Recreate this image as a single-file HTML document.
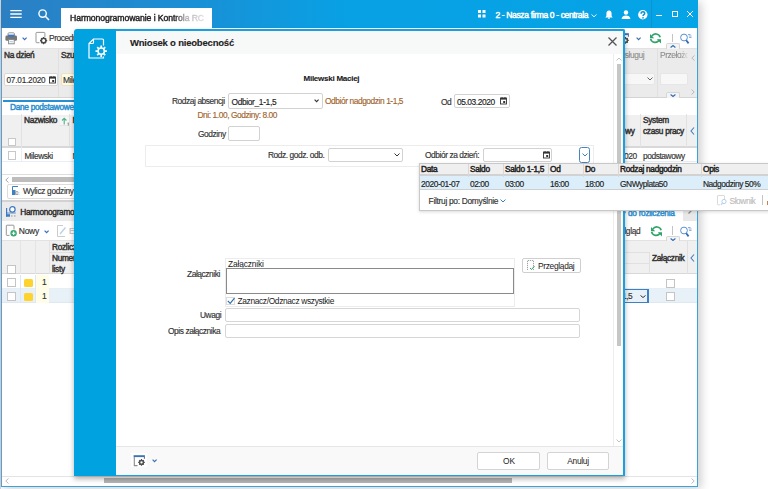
<!DOCTYPE html>
<html><head><meta charset="utf-8">
<style>
*{box-sizing:border-box;margin:0;padding:0}
html,body{width:768px;height:489px;overflow:hidden;background:#fff;font-family:"Liberation Sans",sans-serif;color:#333}
.a{position:absolute}
.t{position:absolute;white-space:nowrap;font-size:8.4px;line-height:10px;letter-spacing:-0.43px;-webkit-text-stroke:0.15px}
.b{font-weight:normal;font-size:8.3px;letter-spacing:-0.3px;-webkit-text-stroke:0.45px}
.inp{position:absolute;background:#fff;border:1px solid #d2d2d2;border-radius:2px}
.cb{position:absolute;width:9px;height:9px;border:1px solid #c4c4c4;background:#fff}
svg{position:absolute;overflow:visible}
</style></head><body>
<!-- ================= BACKGROUND WINDOW ================= -->
<div class="a" style="left:0;top:0;width:1px;height:489px;background:#d6d6d6"></div>
<div class="a" style="left:1px;top:0;width:697px;height:487px;background:#fff;border-left:1px solid #5c9fd5;border-right:1px solid #38a3df;border-bottom:1px solid #38a3df;box-shadow:3px 2px 9px rgba(0,0,0,0.2)"></div>
<!-- top bar -->
<div class="a" style="left:1px;top:0;width:697px;height:28px;background:linear-gradient(90deg,#2c7fc3 0%,#1c8ed4 25%,#08a1e4 50%,#04a4e6 100%)"></div>
<!-- hamburger -->
<svg style="left:10px;top:9px" width="12" height="10"><path d="M0.3 1.6 H11.7 M0.3 5 H11.7 M0.3 8.4 H11.7" stroke="#fff" stroke-width="1.3"/></svg>
<!-- search -->
<svg style="left:38px;top:9px" width="12" height="12"><circle cx="4.6" cy="4.6" r="3.7" fill="none" stroke="#fff" stroke-width="1.4"/><line x1="7.3" y1="7.3" x2="11" y2="11" stroke="#fff" stroke-width="1.6"/></svg>
<!-- tab -->
<div class="a" style="left:61px;top:8px;width:151px;height:20px;background:#fff"></div>
<div class="t" style="left:70px;top:12.8px;font-size:8.7px;letter-spacing:-0.1px;-webkit-text-stroke:0.4px;color:#1e1e1e;-webkit-mask-image:linear-gradient(90deg,#000 0,#000 104px,rgba(0,0,0,0.35) 116px,rgba(0,0,0,0.12) 135px)">Harmonogramowanie i Kontrola RC</div>
<!-- right header items -->
<svg style="left:478px;top:10px" width="8" height="8"><rect x="0" y="0" width="3" height="3" fill="#fff"/><rect x="4.5" y="0" width="3" height="3" fill="#fff"/><rect x="0" y="4.5" width="3" height="3" fill="#fff"/><rect x="4.5" y="4.5" width="3" height="3" fill="#fff"/></svg>
<div class="t" style="left:495.4px;top:9.5px;font-size:8.5px;letter-spacing:-0.35px;-webkit-text-stroke:0.45px;color:#fff">2 - Nasza firma 0 - centrala</div>
<svg style="left:590.5px;top:13.5px" width="6" height="4"><path d="M0.5 0.5 L3 2.8 L5.5 0.5" fill="none" stroke="#fff" stroke-width="0.9"/></svg>
<svg style="left:605px;top:10px" width="8" height="9"><path d="M4 0.4 C2.1 0.4 1.4 2 1.4 3.8 V6 L0.3 7.4 H7.7 L6.6 6 V3.8 C6.6 2 5.9 0.4 4 0.4 Z" fill="#fff"/><circle cx="4" cy="8.1" r="0.9" fill="#fff"/></svg>
<svg style="left:621px;top:9.5px" width="10" height="10"><circle cx="5" cy="2.5" r="2.2" fill="#fff"/><path d="M0.6 8.9 C0.9 6.2 2.9 5.4 5 5.4 C7.1 5.4 9.1 6.2 9.4 8.9 Z" fill="#fff"/></svg>
<svg style="left:638px;top:9.5px" width="10" height="10"><circle cx="4.8" cy="4.7" r="4.7" fill="#fff"/><path d="M3.1 3.7 C3.1 2.4 3.9 1.7 4.9 1.7 C6 1.7 6.7 2.4 6.7 3.4 C6.7 4.6 5 4.8 5 6.1" fill="none" stroke="#0a92d6" stroke-width="1.5"/><circle cx="5" cy="7.8" r="0.85" fill="#0a92d6"/></svg>
<div class="a" style="left:651px;top:0;width:1px;height:28px;background:#1590cf"></div>
<div class="a" style="left:656px;top:15px;width:6px;height:1px;background:#fff"></div>
<div class="a" style="left:672px;top:10.5px;width:6px;height:6px;border:1px solid #fff"></div>
<svg style="left:687px;top:11px" width="6" height="6"><path d="M0 0 L6 6 M6 0 L0 6" stroke="#fff" stroke-width="1"/></svg>

<!-- toolbar 1 -->
<div class="a" style="left:2px;top:48px;width:695px;height:1px;background:#e2e2e2"></div>
<svg style="left:5px;top:32px" width="13" height="13"><rect x="3" y="0.8" width="6.4" height="4" rx="1" fill="#fff" stroke="#8a8a8a" stroke-width="0.9"/><rect x="0.4" y="3.6" width="11.6" height="5.2" rx="1.4" fill="#767676"/><rect x="3" y="2.6" width="6.4" height="2.2" fill="#3c78c0"/><rect x="3.6" y="7.6" width="5.6" height="4.2" fill="#fff" stroke="#808080" stroke-width="0.9"/><rect x="4.6" y="9.3" width="3.4" height="0.9" fill="#9cbde6"/></svg>
<svg style="left:22px;top:36.5px" width="6" height="4"><path d="M0.6 0.6 L2.6 2.6 L4.6 0.6" fill="none" stroke="#3a6fb5" stroke-width="1.2"/></svg>
<svg style="left:35px;top:32px" width="13" height="13"><path d="M4.5 10.7 H1.8 Q1 10.7 1 9.9 V1.2 Q1 0.4 1.8 0.4 H9.1 Q9.9 0.4 9.9 1.2 V5" fill="none" stroke="#8c8c8c" stroke-width="0.9"/><g transform="translate(8.6,8.6)"><circle r="2.3" fill="none" stroke="#4a4a4a" stroke-width="1.6"/><path d="M0 -3.6 V-2.4 M0 2.4 V3.6 M-3.6 0 H-2.4 M2.4 0 H3.6 M-2.5 -2.5 L-1.7 -1.7 M2.5 2.5 L1.7 1.7 M-2.5 2.5 L-1.7 1.7 M2.5 -2.5 L1.7 -1.7" stroke="#4a4a4a" stroke-width="1.2"/></g></svg>
<div class="t" style="left:49px;top:33px;color:#333">Procedury</div>

<!-- filter panel -->
<div class="a" style="left:2px;top:49px;width:695px;height:49px;background:#ebebeb;border-bottom:1px solid #d4d4d4"></div>
<div class="t b" style="left:4px;top:50px">Na dzień</div>
<div class="inp" style="left:4px;top:73px;width:54px;height:13px;border-color:#d8d8d8"></div>
<div class="t" style="left:6.5px;top:75.5px;font-size:8.2px;letter-spacing:-0.2px">07.01.2020</div>
<svg style="left:49px;top:76px" width="7" height="8"><rect x="0.5" y="1" width="6" height="6" fill="none" stroke="#333" stroke-width="0.9"/><rect x="0.5" y="1" width="6" height="1.6" fill="#333"/><rect x="3.2" y="4" width="2" height="2" fill="#333"/><rect x="1.6" y="0" width="0.9" height="1.2" fill="#333"/><rect x="4.5" y="0" width="0.9" height="1.2" fill="#333"/></svg>
<div class="a" style="left:58px;top:49px;width:1px;height:48px;background:#e0e0e0"></div>
<div class="t b" style="left:61px;top:50px">Szukaj</div>
<div class="inp" style="left:60.5px;top:73px;width:40px;height:12.5px;background:#fffbe2;border-color:#ebe4c4"></div>
<div class="t" style="left:63px;top:75px;font-size:8.5px">Milewski</div>
<!-- filter right side -->
<div class="t" style="left:614.5px;top:50px;color:#8c8c8c;-webkit-text-stroke:0.1px">Obsługuj</div>
<div class="inp" style="left:600px;top:73px;width:55px;height:12px;background:#f7f7f7;border-color:#e6e6e6"></div>
<svg style="left:647px;top:77px" width="6" height="4"><path d="M0.5 0.5 L3 3 L5.5 0.5" fill="none" stroke="#666" stroke-width="1"/></svg>
<div class="a" style="left:657px;top:49px;width:1px;height:48px;background:#e0e0e0"></div>
<div class="t" style="left:660px;top:50px;color:#8c8c8c;-webkit-text-stroke:0.1px;-webkit-mask-image:linear-gradient(90deg,#000 0,#000 20px,rgba(0,0,0,0.25) 27px,transparent 28px)">Przełożony</div>
<div class="inp" style="left:660px;top:73px;width:28px;height:12px;background:#f7f7f7;border-color:#e6e6e6"></div>
<svg style="left:691px;top:55px" width="4" height="6"><path d="M3.5 0.5 L0.8 3 L3.5 5.5" fill="none" stroke="#bbb" stroke-width="1"/></svg>
<svg style="left:691px;top:89px" width="4" height="6"><path d="M0.5 0.5 L3.2 3 L0.5 5.5" fill="none" stroke="#bbb" stroke-width="1"/></svg>
<div class="a" style="left:665.5px;top:43px;width:14.5px;height:6px;background:#f4f4f4;border:1px solid #d6d6d6;border-bottom:none;border-radius:2px 2px 0 0"></div>
<svg style="left:670px;top:45px" width="6" height="3"><path d="M0.6 2.4 L3 0.6 L5.4 2.4" fill="none" stroke="#2f6db5" stroke-width="1.2"/></svg>
<div class="a" style="left:665.5px;top:92px;width:14.5px;height:6px;background:#f4f4f4;border:1px solid #d6d6d6;border-bottom:none;border-radius:2px 2px 0 0"></div>
<svg style="left:670px;top:93.5px" width="6" height="3"><path d="M0.6 0.6 L3 2.4 L5.4 0.6" fill="none" stroke="#2f6db5" stroke-width="1.2"/></svg>
<!-- toolbar right icons -->
<svg style="left:615px;top:31px" width="16" height="14"><path d="M13.4 4 V5.8" fill="none" stroke="#555" stroke-width="0.9"/><rect x="2.6" y="2.2" width="11.3" height="1.9" fill="#3d73b8"/><g transform="translate(10.5,9.4)"><circle r="1.9" fill="none" stroke="#505050" stroke-width="1.5"/><path d="M0 -3.3 V-2 M0 2 V3.3 M-3.3 0 H-2 M2 0 H3.3 M-2.3 -2.3 L-1.4 -1.4 M2.3 2.3 L1.4 1.4 M-2.3 2.3 L-1.4 1.4 M2.3 -2.3 L1.4 -1.4" stroke="#505050" stroke-width="1.2"/></g></svg>
<svg style="left:635.8px;top:36.5px" width="6" height="4"><path d="M0.6 0.6 L2.6 2.6 L4.6 0.6" fill="none" stroke="#3a6fb5" stroke-width="1.2"/></svg>
<svg style="left:649.3px;top:32.3px" width="13" height="12"><path d="M2.8 4.2 A4.6 4.6 0 0 1 11.2 5.2" fill="none" stroke="#2fa36b" stroke-width="1.6"/><path d="M1 2 L1 6.3 L5.2 6.3 Z" fill="#2fa36b"/><path d="M10.2 7.8 A4.6 4.6 0 0 1 1.6 6.9" fill="none" stroke="#2fa36b" stroke-width="1.6"/><path d="M12 11.5 L12 7.2 L7.8 7.2 Z" fill="#2fa36b"/></svg>
<div class="a" style="left:672px;top:34px;width:1px;height:8px;background:#c4c4c4"></div>
<svg style="left:680px;top:32.5px" width="13" height="12"><circle cx="4" cy="4.5" r="3.4" fill="none" stroke="#5b8fcf" stroke-width="1"/><line x1="6.2" y1="7.2" x2="8.6" y2="10.4" stroke="#2f6db5" stroke-width="1.8"/><path d="M8 1.5 H10.5 M8.8 3 H11.5 M9.2 4.5 H11.5" stroke="#7aa5dc" stroke-width="0.9"/></svg>

<!-- tabs / table 1 -->
<div class="a" style="left:3px;top:100px;width:80px;height:2px;background:#2a8fd0"></div>
<div class="t b" style="left:10px;top:102px;color:#2b8fd0">Dane podstawowe</div>
<div class="a" style="left:2px;top:115px;width:695px;height:33px;background:#f0f0f0;border-bottom:2px solid #d8d8d8"></div>
<div class="a" style="left:21px;top:114px;width:1px;height:33px;background:#e2e2e2"></div>
<div class="cb" style="left:7.5px;top:137.5px;width:8.5px;height:8.5px;border-color:#c8c8c8"></div>
<div class="t b" style="left:24px;top:115px">Nazwisko</div>
<div class="a" style="left:58.5px;top:115.5px;width:11px;height:10px;background:#f6f6f6;border:1px solid #e4e4e4;border-top-color:#f0f0f0;border-left-color:#f0f0f0"></div>
<svg style="left:61px;top:117px" width="9" height="9"><path d="M3.2 7.5 V1.3 M1 3.5 L3.2 1.2 L5.4 3.5" fill="none" stroke="#4fb383" stroke-width="1.1"/><path d="M6.6 6.2 L7.3 5.8 V8.6" fill="none" stroke="#666" stroke-width="0.7"/></svg>
<div class="a" style="left:69px;top:114px;width:1px;height:33px;background:#e2e2e2"></div><div class="t b" style="left:72.5px;top:115px">N</div><div class="t" style="left:72.5px;top:151px">M</div>
<div class="a" style="left:640px;top:114px;width:1px;height:33px;background:#e2e2e2"></div>
<div class="a" style="left:686px;top:114px;width:1px;height:33px;background:#e2e2e2"></div>
<div class="t b" style="left:625px;top:126px">wy</div>
<div class="t b" style="left:643px;top:114.5px;line-height:11.5px">System<br>czasu pracy</div>
<svg style="left:690px;top:127px" width="5" height="8"><path d="M4 0.5 L1 4 L4 7.5" fill="none" stroke="#3f7fc4" stroke-width="1.1"/></svg>
<div class="cb" style="left:7.5px;top:151px;width:8.5px;height:8.5px;border-color:#c8c8c8"></div>
<div class="a" style="left:21px;top:147px;width:1px;height:14px;background:#e6eef6"></div>
<div class="t" style="left:24.5px;top:151px">Milewski</div>
<div class="t" style="left:624px;top:151px">020</div>
<div class="t" style="left:643px;top:151px">podstawowy</div>
<div class="a" style="left:2px;top:161px;width:695px;height:1px;background:#e8eef5"></div>
<div class="a" style="left:2px;top:174px;width:695px;height:1px;background:#dedede"></div>
<!-- hscroll 1 -->
<svg style="left:5px;top:177px" width="4" height="6"><path d="M3.5 0.5 L0.8 3 L3.5 5.5" fill="none" stroke="#aaa" stroke-width="1"/></svg>
<div class="a" style="left:12px;top:177px;width:600px;height:5px;background:#bdbdbd"></div>
<!-- Wylicz godziny -->
<div class="a" style="left:7px;top:184px;width:80px;height:15px;background:#fff;border:1px solid #dcdcdc;border-radius:2px"></div>
<svg style="left:12px;top:186px" width="9" height="10"><path d="M0.5 9 V0.5 H6" fill="none" stroke="#3f7fc4" stroke-width="1"/><rect x="0.5" y="4" width="3" height="5" fill="#3f7fc4"/><text x="3.5" y="9" font-size="5" fill="#555" font-family="Liberation Sans">0:</text></svg>
<div class="t" style="left:23px;top:186px;font-size:8.3px;letter-spacing:-0.3px">Wylicz godziny</div>
<!-- section 2 header -->
<div class="a" style="left:2px;top:200px;width:200px;height:21px;background:#ebebeb;border-top:2px solid #d2d2d2"></div>
<svg style="left:5px;top:205px" width="12" height="13"><path d="M1.6 3 V11.5" stroke="#3d78c2" stroke-width="1.2"/><path d="M1.6 8 H10.8" stroke="#3d78c2" stroke-width="0.8"/><rect x="1" y="9.2" width="4" height="2.5" fill="#3d78c2"/><circle cx="7.4" cy="4.4" r="2.7" fill="#fff" stroke="#3d78c2" stroke-width="1.2"/><rect x="6" y="10.2" width="1.5" height="1.5" fill="#b0b0b0"/><rect x="9" y="10.2" width="1.5" height="1.5" fill="#b0b0b0"/></svg>
<div class="t" style="left:20.3px;top:206.5px;font-size:8.3px;letter-spacing:-0.3px;-webkit-text-stroke:0.4px;color:#2a2a2a">Harmonogramowanie</div>
<div class="t b" style="left:628px;top:207.8px;color:#2b8fd0">do rozliczenia</div><svg style="left:623px;top:211px" width="4" height="5"><path d="M0.5 0.5 L3 0.5 L1.5 4 Z" fill="#2b8fd0"/></svg>
<div class="a" style="left:683px;top:210px;width:14px;height:11px;background:#e8e8e8"></div>
<svg style="left:688px;top:210px" width="5" height="4"><path d="M0.5 3.5 L3.5 0.5" fill="none" stroke="#8a8a8a" stroke-width="1.2"/></svg>
<!-- toolbar 2 -->
<svg style="left:5px;top:224px" width="13" height="14"><path d="M4.5 11.4 H2 Q1.3 11.4 1.3 10.7 V1.9 Q1.3 1.2 2 1.2 H8.3 Q9 1.2 9 1.9 V5.5" fill="none" stroke="#8a8a8a" stroke-width="0.9"/><circle cx="8.6" cy="9.2" r="3.2" fill="#3aa873"/><path d="M8.6 7.4 V11 M6.8 9.2 H10.4" stroke="#fff" stroke-width="1.1"/></svg>
<div class="t" style="left:18.8px;top:226px;font-size:8.5px;letter-spacing:-0.3px">Nowy</div>
<svg style="left:44px;top:229.5px" width="6" height="4"><path d="M0.6 0.6 L2.6 2.6 L4.6 0.6" fill="none" stroke="#3a6fb5" stroke-width="1.2"/></svg>
<svg style="left:57px;top:225px" width="10" height="12"><path d="M6 0.5 H0.5 V11.5 H8" fill="none" stroke="#ccc" stroke-width="1"/><path d="M3 9 L8.5 2.5" stroke="#b8d0ea" stroke-width="1.3"/></svg>
<div class="t" style="left:69px;top:226px;color:#bbb">E</div>
<div class="a" style="left:2px;top:240px;width:695px;height:1px;background:#e2e2e2"></div>
<div class="t" style="left:612px;top:226px;font-size:8.3px;letter-spacing:-0.3px">Podgląd</div>
<svg style="left:649.5px;top:225px" width="13" height="12"><path d="M2.8 4.2 A4.6 4.6 0 0 1 11.2 5.2" fill="none" stroke="#2fa36b" stroke-width="1.6"/><path d="M1 2 L1 6.3 L5.2 6.3 Z" fill="#2fa36b"/><path d="M10.2 7.8 A4.6 4.6 0 0 1 1.6 6.9" fill="none" stroke="#2fa36b" stroke-width="1.6"/><path d="M12 11.5 L12 7.2 L7.8 7.2 Z" fill="#2fa36b"/></svg>
<div class="a" style="left:672px;top:226px;width:1px;height:9px;background:#c4c4c4"></div>
<svg style="left:680px;top:225.5px" width="13" height="12"><circle cx="4" cy="4.5" r="3.4" fill="none" stroke="#5b8fcf" stroke-width="1"/><line x1="6.2" y1="7.2" x2="8.6" y2="10.4" stroke="#2f6db5" stroke-width="1.8"/><path d="M8 1.5 H10.5 M8.8 3 H11.5 M9.2 4.5 H11.5" stroke="#7aa5dc" stroke-width="0.9"/></svg>
<div class="a" style="left:665.5px;top:236px;width:14.5px;height:6px;background:#f4f4f4;border:1px solid #d6d6d6;border-bottom:none;border-radius:2px 2px 0 0"></div>
<svg style="left:670px;top:237.5px" width="6" height="3"><path d="M0.6 0.6 L3 2.4 L5.4 0.6" fill="none" stroke="#2f6db5" stroke-width="1.2"/></svg>
<!-- table 2 -->
<div class="a" style="left:2px;top:241px;width:695px;height:33px;background:#f0f0f0;border-bottom:1px solid #d8d8d8"></div>
<div class="a" style="left:20px;top:241px;width:1px;height:33px;background:#e4e4e4"></div>
<div class="a" style="left:35px;top:241px;width:1px;height:33px;background:#e4e4e4"></div>
<div class="a" style="left:49px;top:241px;width:1px;height:33px;background:#e4e4e4"></div>
<div class="a" style="left:50px;top:252px;width:599px;height:1px;background:#e0e0e0"></div>
<div class="a" style="left:150px;top:263px;width:499px;height:1px;background:#e0e0e0"></div>
<div class="cb" style="left:7px;top:265px"></div>
<div class="t b" style="left:52px;top:242px;line-height:11px">Rozliczenie<br>Numer<br>listy</div>
<div class="a" style="left:649px;top:252px;width:1px;height:22px;background:#e0e0e0"></div>
<div class="a" style="left:687px;top:241px;width:1px;height:33px;background:#e0e0e0"></div>
<div class="t b" style="left:652px;top:253px">Załącznik</div>
<svg style="left:690px;top:254px" width="5" height="8"><path d="M4 0.5 L1 4 L4 7.5" fill="none" stroke="#3f7fc4" stroke-width="1.1"/></svg>
<!-- rows -->
<div class="a" style="left:2px;top:275px;width:695px;height:14px;background:#fff;border-bottom:1px solid #e6eef6"></div>
<div class="a" style="left:2px;top:289px;width:695px;height:14px;background:#e9f1f8;border-bottom:1px solid #dfe8f0"></div>
<div class="a" style="left:20px;top:275px;width:1px;height:28px;background:#dce8f3"></div>
<div class="a" style="left:35px;top:275px;width:1px;height:28px;background:#dce8f3"></div>
<div class="a" style="left:36px;top:275px;width:13px;height:28px;background:#fffde8"></div>
<div class="cb" style="left:7px;top:278px"></div>
<div class="cb" style="left:7px;top:292px"></div>
<div class="a" style="left:24px;top:279px;width:9px;height:7.5px;background:#ffd32e;border-radius:1.5px"></div>
<div class="a" style="left:24px;top:293px;width:9px;height:7.5px;background:#ffd32e;border-radius:1.5px"></div>
<div class="t" style="left:42px;top:277px;font-size:8.5px">1</div>
<div class="t" style="left:42px;top:291px;font-size:8.5px">1</div>

<div class="cb" style="left:666px;top:278.5px;border-color:#c4c4c4"></div>
<div class="cb" style="left:666px;top:292px;border-color:#c4c4c4"></div>
<div class="a" style="left:618px;top:289px;width:31px;height:14px;border:1px solid #3f7fc4;border-right-width:2px;background:#e9f1f8"></div>
<div class="t" style="left:622px;top:291px">1,5</div>
<svg style="left:640px;top:295px" width="6" height="3"><path d="M0.5 0.5 L3 2.5 L5.5 0.5" fill="none" stroke="#333" stroke-width="1"/></svg>
<!-- bottom hscroll -->
<svg style="left:5px;top:478px" width="4" height="6"><path d="M3.5 0.5 L0.8 3 L3.5 5.5" fill="none" stroke="#bbb" stroke-width="1"/></svg>
<svg style="left:691px;top:478px" width="4" height="6"><path d="M0.5 0.5 L3.2 3 L0.5 5.5" fill="none" stroke="#bbb" stroke-width="1"/></svg>
<div class="a" style="left:104px;top:478px;width:408px;height:5px;background:#b5b5b5"></div>
<div class="a" style="left:2px;top:476px;width:695px;height:1px;background:#e4e4e4"></div>

<!-- ================= DIALOG ================= -->
<div class="a" style="left:74px;top:29px;width:551px;height:447px;box-shadow:0 3px 5px rgba(0,0,0,0.3)"></div>
<div class="a" style="left:74px;top:29px;width:42px;height:447px;background:#01a2e0;border-radius:3px 0 0 0"></div>
<svg style="left:82px;top:34px" width="30" height="28"><path d="M21.5 11.5 V6 Q21.5 5 20.5 5 H11.5 L7 9.5 V24 H21.5 V22.5" fill="none" stroke="#fff" stroke-width="1.2"/><path d="M11.5 5 V8.5 Q11.5 9.5 10.5 9.5 H7" fill="none" stroke="#fff" stroke-width="1.1"/><g transform="translate(19.2,17.2)"><circle r="3.1" fill="none" stroke="#fff" stroke-width="1.5"/><path d="M0 -5.7 V-3.3 M0 3.3 V5.7 M-5.7 0 H-3.3 M3.3 0 H5.7 M-4 -4 L-2.3 -2.3 M4 4 L2.3 2.3 M-4 4 L-2.3 2.3 M4 -4 L2.3 -2.3" stroke="#fff" stroke-width="1.7"/></g></svg>
<div class="a" style="left:116px;top:29px;width:509px;height:447px;background:#fff;border-top:2px solid #1aa0e0;border-right:2px solid #1aa0e0;border-bottom:2px solid #1aa0e0;border-radius:0 2px 0 0"></div>
<div class="a" style="left:116px;top:31px;width:507px;height:23px;background:#f7f8f8"></div>
<div class="t" style="left:130px;top:38px;font-size:9.5px;font-weight:bold;letter-spacing:-0.2px;-webkit-text-stroke:0.1px;color:#222">Wniosek o nieobecność</div>
<svg style="left:608px;top:37px" width="9" height="9"><path d="M0.5 0.5 L8.5 8.5 M8.5 0.5 L0.5 8.5" stroke="#555" stroke-width="1.3"/></svg>
<!-- dialog scrollbar -->
<div class="a" style="left:613px;top:54px;width:1px;height:392px;background:#ececec"></div>
<svg style="left:616px;top:57px" width="6" height="4"><path d="M0.5 3.5 L3 1 L5.5 3.5" fill="none" stroke="#bbb" stroke-width="0.9"/></svg>
<div class="a" style="left:617px;top:64px;width:4px;height:282px;background:#c6c6c6"></div>
<svg style="left:616px;top:439px" width="6" height="4"><path d="M0.5 0.5 L3 3 L5.5 0.5" fill="none" stroke="#bbb" stroke-width="0.9"/></svg>
<!-- footer -->
<div class="a" style="left:116px;top:446px;width:507px;height:29px;background:#f9f9f9;border-top:1px solid #e6e6e6"></div>
<div class="a" style="left:131px;top:453px;width:16px;height:14px;background:#fff"></div><svg style="left:131px;top:453px" width="16" height="14"><path d="M3.3 4 V12.6 H6.5" fill="none" stroke="#8c8c8c" stroke-width="1.1"/><path d="M13.4 4 V5.8" fill="none" stroke="#555" stroke-width="0.9"/><rect x="2.6" y="2.2" width="11.3" height="1.9" fill="#3d73b8"/><g transform="translate(10.5,9.4)"><circle r="1.9" fill="none" stroke="#505050" stroke-width="1.5"/><path d="M0 -3.3 V-2 M0 2 V3.3 M-3.3 0 H-2 M2 0 H3.3 M-2.3 -2.3 L-1.4 -1.4 M2.3 2.3 L1.4 1.4 M-2.3 2.3 L-1.4 1.4 M2.3 -2.3 L1.4 -1.4" stroke="#505050" stroke-width="1.2"/></g></svg>
<svg style="left:151.8px;top:459px" width="6" height="4"><path d="M0.6 0.6 L2.5 2.6 L4.6 0.6" fill="none" stroke="#3a6fb5" stroke-width="1.2"/></svg>
<div class="a" style="left:477px;top:452px;width:63px;height:18px;background:#fff;border:1px solid #d4d4d4;border-radius:2px"></div>
<div class="t" style="left:503px;top:455.8px;letter-spacing:0;-webkit-text-stroke:0;color:#222">OK</div>
<div class="a" style="left:547px;top:452px;width:62px;height:18px;background:#fff;border:1px solid #d4d4d4;border-radius:2px"></div>
<div class="t" style="left:567.3px;top:455.8px;letter-spacing:-0.3px;-webkit-text-stroke:0;color:#222">Anuluj</div>

<!-- form -->
<div class="t" style="left:303.5px;top:73.8px;font-size:8px;color:#1a1a1a;font-weight:bold;letter-spacing:-0.25px;-webkit-text-stroke:0.1px">Milewski Maciej</div>
<div class="t" style="left:172px;top:96px;">Rodzaj absencji</div>
<div class="inp" style="left:228px;top:93px;width:95px;height:16px;"></div>
<div class="t" style="left:231.5px;top:96.6px;color:#222;letter-spacing:-0.35px">Odbior_1-1,5</div>
<svg style="left:314.3px;top:99px" width="6" height="4"><path d="M0.6 0.6 L2.6 2.6 L4.6 0.6" fill="none" stroke="#333" stroke-width="1.1"/></svg>
<div class="t" style="left:325px;top:96.4px;color:#9f6430">Odbiór nadgodzin 1-1,5</div>
<div class="t" style="left:441px;top:96.7px;">Od</div>
<div class="inp" style="left:454px;top:94px;width:56px;height:14px;"></div>
<div class="t" style="left:457px;top:96.7px;color:#222">05.03.2020</div>
<svg style="left:500px;top:97px" width="7" height="8"><rect x="0.5" y="1" width="6" height="6" fill="none" stroke="#333" stroke-width="0.9"/><rect x="0.5" y="1" width="6" height="1.6" fill="#333"/><rect x="3.2" y="4" width="2" height="2" fill="#333"/><rect x="1.6" y="0" width="0.9" height="1.2" fill="#333"/><rect x="4.5" y="0" width="0.9" height="1.2" fill="#333"/></svg>
<div class="t" style="left:197.5px;top:109.6px;color:#9f6430">Dni: 1.00, Godziny: 8.00</div>
<div class="t" style="left:198px;top:129px;">Godziny</div>
<div class="inp" style="left:228px;top:126px;width:32px;height:15px;"></div>
<!-- panel -->
<div class="a" style="left:145px;top:145px;width:449px;height:22px;border:1px solid #ececec;background:#fff"></div>
<div class="t" style="left:268px;top:150px;">Rodz. godz. odb.</div>
<div class="inp" style="left:328px;top:148px;width:75px;height:14px;"></div>
<svg style="left:394px;top:153px" width="6" height="4"><path d="M0.5 0.5 L3 3 L5.5 0.5" fill="none" stroke="#333" stroke-width="1"/></svg>
<div class="t" style="left:425px;top:150px;">Odbiór za dzień:</div>
<div class="inp" style="left:483px;top:148px;width:69px;height:14px;"></div>
<svg style="left:543px;top:151px" width="7" height="8"><rect x="0.5" y="1" width="6" height="6" fill="none" stroke="#333" stroke-width="0.9"/><rect x="0.5" y="1" width="6" height="1.6" fill="#333"/><rect x="3.2" y="4" width="2" height="2" fill="#333"/><rect x="1.6" y="0" width="0.9" height="1.2" fill="#333"/><rect x="4.5" y="0" width="0.9" height="1.2" fill="#333"/></svg>
<div class="a" style="left:579px;top:147px;width:11px;height:16px;background:#fff;border:1px solid #4a84be;border-radius:2.5px"></div>
<svg style="left:582px;top:153px" width="6" height="4"><path d="M0.5 0.5 L3 3 L5.5 0.5" fill="none" stroke="#3f7fc4" stroke-width="1"/></svg>
<!-- attachments -->
<div class="t" style="left:187px;top:269px;">Załączniki</div>
<div class="a" style="left:225px;top:258px;width:290px;height:49px;border:1px solid #ececec;background:#fff"></div>
<div class="t" style="left:228px;top:259px;color:#222;letter-spacing:-0.15px;-webkit-text-stroke:0">Załączniki</div>
<div class="a" style="left:226px;top:268px;width:288px;height:26px;border:1px solid #8a8a8a;border-top-width:1px;background:#fff"></div>
<div class="a" style="left:226px;top:297px;width:9px;height:8px;border:1px solid #dcdcdc;background:#fff"></div><svg style="left:227px;top:297px" width="9" height="8"><path d="M0.8 3.8 L3.2 6.3 L7.5 1.2" fill="none" stroke="#2d6fae" stroke-width="1.2"/></svg>
<div class="t" style="left:237.5px;top:296px;color:#222;letter-spacing:-0.35px;-webkit-text-stroke:0">Zaznacz/Odznacz wszystkie</div>
<div class="a" style="left:522px;top:258px;width:59px;height:15px;background:#fff;border:1px solid #cfcfcf;border-radius:2px"></div>
<svg style="left:527px;top:260px" width="8" height="11"><path d="M0.5 10 V0.5 H6.5 V10" fill="none" stroke="#999" stroke-width="0.9" stroke-dasharray="1.2 0.8"/><path d="M3 8 L4.5 9.5 L7.5 6" fill="none" stroke="#2fa360" stroke-width="1"/></svg>
<div class="t" style="left:538px;top:261px;color:#222;letter-spacing:-0.32px;-webkit-text-stroke:0">Przeglądaj</div>
<div class="t" style="left:200px;top:309.9px;">Uwagi</div>
<div class="inp" style="left:225px;top:308px;width:355px;height:14px;border-color:#d6d6d6"></div>
<div class="t" style="left:168px;top:326px;">Opis załącznika</div>
<div class="inp" style="left:225px;top:324px;width:355px;height:14px;border-color:#d6d6d6"></div>

<!-- ================= POPUP ================= -->
<div class="a" style="left:419px;top:163px;width:360px;height:48px;background:#fff;border:1px solid #c8c8c8;box-shadow:0 1px 3px rgba(0,0,0,0.15)"></div>
<div class="a" style="left:420px;top:164px;width:348px;height:12px;background:#efefef;border-bottom:2px solid #d2d2d2"></div>
<div class="a" style="left:420px;top:176px;width:348px;height:14px;background:#dbeef9;border-bottom:1px solid #cfcfcf"></div>
<div class="a" style="left:468px;top:164px;width:1px;height:13px;background:#d8d8d8"></div>
<div class="a" style="left:503px;top:164px;width:1px;height:13px;background:#d8d8d8"></div>
<div class="a" style="left:548px;top:164px;width:1px;height:13px;background:#d8d8d8"></div>
<div class="a" style="left:583px;top:164px;width:1px;height:13px;background:#d8d8d8"></div>
<div class="a" style="left:618px;top:164px;width:1px;height:13px;background:#d8d8d8"></div>
<div class="a" style="left:701px;top:164px;width:1px;height:13px;background:#d8d8d8"></div>
<div class="t b" style="left:421px;top:164.3px;color:#222">Data</div>
<div class="t b" style="left:470px;top:164.3px;color:#222">Saldo</div>
<div class="t b" style="left:505px;top:164.3px;color:#222">Saldo 1-1,5</div>
<div class="t b" style="left:550px;top:164.3px;color:#222">Od</div>
<div class="t b" style="left:585px;top:164.3px;color:#222">Do</div>
<div class="t b" style="left:620px;top:164.3px;color:#222">Rodzaj nadgodzin</div>
<div class="t b" style="left:703px;top:164.3px;color:#222">Opis</div>
<div class="t" style="left:421px;top:178.5px;color:#222">2020-01-07</div>
<div class="t" style="left:470px;top:178.5px;color:#222">02:00</div>
<div class="t" style="left:505px;top:178.5px;color:#222">03:00</div>
<div class="t" style="left:550px;top:178.5px;color:#222">16:00</div>
<div class="t" style="left:585px;top:178.5px;color:#222">18:00</div>
<div class="t" style="left:620px;top:178.5px;color:#222">GNWyplata50</div>
<div class="t" style="left:703px;top:178.5px;color:#222">Nadgodziny 50%</div>
<div class="t" style="left:428.6px;top:196px;color:#333;letter-spacing:-0.3px">Filtruj po: Domyślnie</div>
<svg style="left:499.5px;top:199px" width="6" height="4"><path d="M0.5 0.5 L3 3 L5.5 0.5" fill="none" stroke="#3f7fc4" stroke-width="1"/></svg>
<svg style="left:717px;top:195px" width="11" height="11"><path d="M3 9.8 H1 Q0.5 9.8 0.5 9.3 V1 Q0.5 0.5 1 0.5 H7 Q7.5 0.5 7.5 1 V4" fill="none" stroke="#d6d6d6" stroke-width="0.9"/><circle cx="7" cy="6.5" r="2.1" fill="none" stroke="#b4cfee" stroke-width="1"/><path d="M5.5 8 L4 9.8" stroke="#b4cfee" stroke-width="1.1"/></svg>
<div class="t" style="left:729.5px;top:196px;color:#bdbdbd">Słownik</div>
<div class="a" style="left:762px;top:195px;width:1px;height:10px;background:#c4c4c4"></div>
<div class="a" style="left:766.5px;top:201px;width:2px;height:4px;background:#c9834a"></div>
</body></html>
